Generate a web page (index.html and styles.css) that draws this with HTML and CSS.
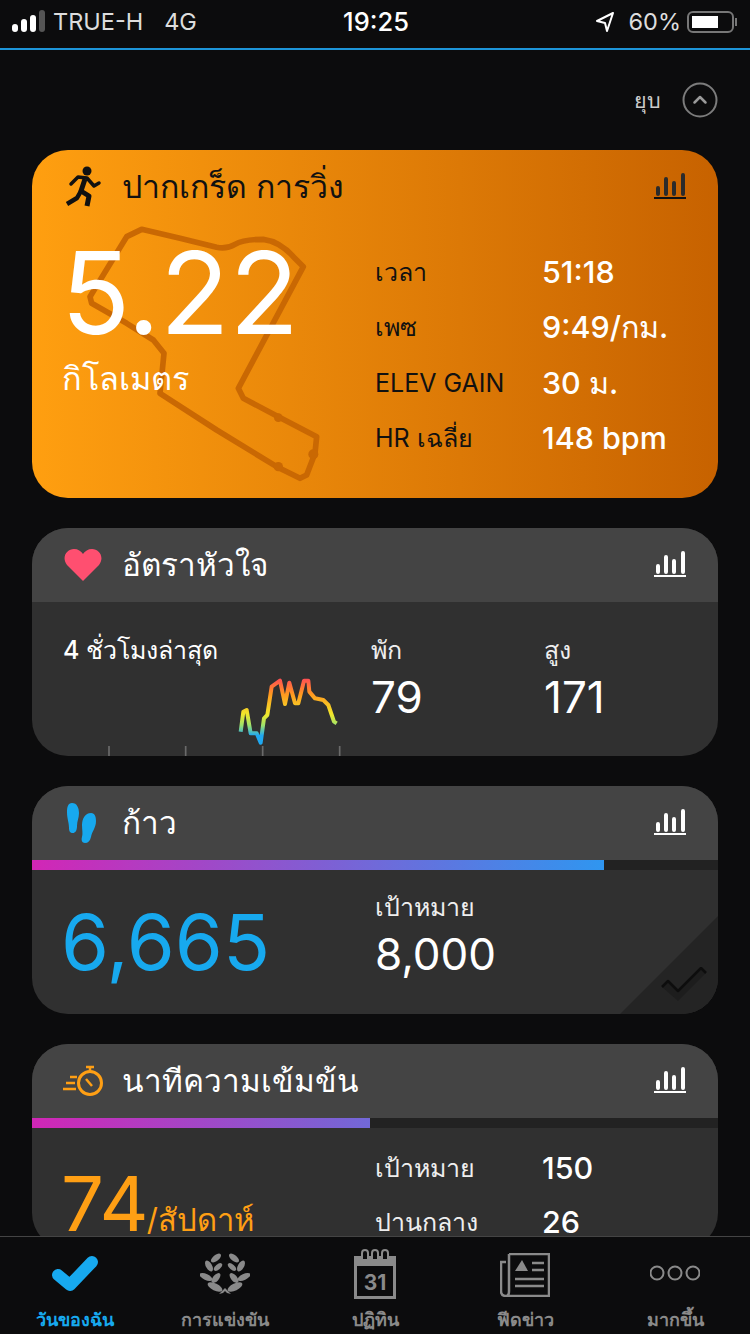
FILE: index.html
```html
<!DOCTYPE html>
<html>
<head>
  <title>Garmin Connect</title>
  <link rel="stylesheet" href="styles.css">
</head>
<body>
  <div class="status">
    <div class="status-left">
      <svg class="signal" width="34" height="24" viewBox="0 0 34 24">
        <rect x="0" y="14" width="6" height="8" rx="3" fill="#fff"/>
        <rect x="9" y="9" width="6" height="13" rx="3" fill="#fff"/>
        <rect x="18" y="5" width="6" height="17" rx="3" fill="#fff"/>
        <rect x="27" y="0" width="6" height="22" rx="3" fill="#555"/>
      </svg>
      <span class="carrier">TRUE-H</span>
      <span class="net">4G</span>
    </div>
    <div class="clock">19:25</div>
    <div class="status-right">
      <svg width="20" height="22" viewBox="0 0 20 22"><path d="M18 2 L2 10 L10 12 L12 20 Z" fill="none" stroke="#fff" stroke-width="2" stroke-linejoin="round"/></svg>
      <span class="pct">60%</span>
      <div class="battery"><div class="battery-fill"></div></div>
      <div class="battery-tip"></div>
    </div>
  </div>

  <div class="content">
    <div class="collapse">
      <span>ยุบ</span>
      <svg width="36" height="36" viewBox="0 0 36 36"><circle cx="18" cy="18" r="16.5" fill="none" stroke="#7c7c7c" stroke-width="2"/><path d="M12.5 20.5 L18 15 L23.500 20.500" fill="none" stroke="#9a9a9a" stroke-width="2.500" stroke-linecap="round" stroke-linejoin="round"/></svg>
    </div>

    <div class="card card-run">
      <svg class="route" width="350" height="350" viewBox="0 0 1050 1050">
        <path d="M335 238 L450 265 L560 292 Q590 298 615 283 Q640 268 700 268 Q750 275 790 320 L820 350 L625 715 L640 745 L745 800 L860 860 L855 910 L830 975 L810 985 L740 950 L560 840 L390 730 L402 610 L370 570 L290 520 L185 460 L180 440 L290 260 Z" fill="none" stroke="#c96803" stroke-width="17" stroke-linejoin="round"/>
        <circle cx="745" cy="803" r="13" fill="#c96803"/>
        <circle cx="850" cy="913" r="15" fill="#c96803"/>
        <circle cx="745" cy="950" r="14" fill="#c96803"/>
      </svg>
      <div class="card-head">
        <svg class="head-icon" width="40" height="44" viewBox="0 0 40 44">
          <circle cx="24" cy="6" r="4.500" fill="#111"/>
          <path d="M8 19 L15 12 L24 13 L31 21 L36 18" fill="none" stroke="#111" stroke-width="3.500" stroke-linecap="round" stroke-linejoin="round"/>
          <path d="M22 14 L18 26 L26 31 L24 41" fill="none" stroke="#111" stroke-width="5" stroke-linejoin="round"/>
          <path d="M18 26 L14 33 L4 39" fill="none" stroke="#111" stroke-width="4.500" stroke-linejoin="round"/>
        </svg>
        <span class="title title-dark">ปากเกร็ด การวิ่ง</span>
        <svg class="chart-icon" width="32" height="28" viewBox="0 0 32 28">
          <path d="M4 21 V15 M12 21 V6 M20 21 V10 M29 21 V2" stroke="#2b2b2b" stroke-width="4" stroke-linecap="round"/>
          <rect x="0" y="24" width="32" height="2" fill="#111"/>
        </svg>
      </div>
      <div class="run-body">
        <div class="run-main">
          <div class="run-dist">5.22</div>
          <div class="run-unit">กิโลเมตร</div>
        </div>
        <div class="run-stats">
          <span class="stat-label">เวลา</span><span class="stat-value">51:18</span>
          <span class="stat-label">เพซ</span><span class="stat-value">9:49/กม.</span>
          <span class="stat-label">ELEV GAIN</span><span class="stat-value">30 ม.</span>
          <span class="stat-label">HR เฉลี่ย</span><span class="stat-value">148 bpm</span>
        </div>
      </div>
    </div>

    <div class="card">
      <div class="card-head head-gray">
        <svg class="head-icon" width="40" height="34" viewBox="0 0 40 34"><path d="M20 33 L4 17 C-2 9 4 1 11 1 C15 1 18 3 20 6 C22 3 25 1 29 1 C36 1 42 9 36 17 Z" fill="#ff4f70"/></svg>
        <span class="title">อัตราหัวใจ</span>
        <svg class="chart-icon" width="32" height="28" viewBox="0 0 32 28">
          <path d="M4 21 V15 M12 21 V6 M20 21 V10 M29 21 V2" stroke="#fff" stroke-width="4" stroke-linecap="round"/>
          <rect x="0" y="24" width="32" height="2" fill="#fff"/>
        </svg>
      </div>
      <div class="heart-body">
        <div class="heart-left">
          <div class="heart-label">4 ชั่วโมงล่าสุด</div>
          <svg class="heart-chart" width="339" height="80" viewBox="6 438 1017 240">
            <defs>
              <linearGradient id="hr" gradientUnits="userSpaceOnUse" x1="0" y1="445" x2="0" y2="640">
                <stop offset="0" stop-color="#ff4d55"/>
                <stop offset="0.25" stop-color="#ff9a1f"/>
                <stop offset="0.55" stop-color="#f2e72a"/>
                <stop offset="0.72" stop-color="#9fe36a"/>
                <stop offset="0.88" stop-color="#1fa8f0"/>
              </linearGradient>
            </defs>
            <path d="M632 605 L640 545 L650 540 L662 610 L680 610 L692 638 L702 565 L712 555 L725 470 L750 452 L765 522 L778 458 L795 520 L805 520 L822 452 L835 452 L838 485 L855 505 L880 510 L895 525 L912 575 L920 580" fill="none" stroke="url(#hr)" stroke-width="12" stroke-linejoin="round"/>
            <path d="M237 648 V678 M467 648 V678 M698 648 V678 M929 648 V678" stroke="#6a6a6a" stroke-width="5"/>
          </svg>
        </div>
        <div class="heart-col">
          <div class="small-label">พัก</div>
          <div class="mid-value">79</div>
        </div>
        <div class="heart-col">
          <div class="small-label">สูง</div>
          <div class="mid-value">171</div>
        </div>
      </div>
    </div>

    <div class="card">
      <div class="card-head head-gray">
        <svg class="head-icon" width="40" height="42" viewBox="0 0 40 42">
          <path d="M9 1 C14 1 16 6 16 11 C16 16 14 19 14 24 C14 29 12 31 10 31 C7 31 6 29 6 26 C6 20 4 17 4 10 C4 5 5 1 9 1 Z" fill="#17a9ef"/>
          <path d="M28 11 C32 11 33 15 33 19 C33 26 29 29 28 35 C27 39 25 41 22 41 C19 41 18 38 19 35 C20 31 19 28 19 23 C19 17 22 11 28 11 Z" fill="#17a9ef"/>
        </svg>
        <span class="title">ก้าว</span>
        <svg class="chart-icon" width="32" height="28" viewBox="0 0 32 28">
          <path d="M4 21 V15 M12 21 V6 M20 21 V10 M29 21 V2" stroke="#fff" stroke-width="4" stroke-linecap="round"/>
          <rect x="0" y="24" width="32" height="2" fill="#fff"/>
        </svg>
      </div>
      <div class="track"><div class="fill" style="width:572px"></div></div>
      <div class="steps-body">
        <div class="steps-count">6,665</div>
        <div class="steps-goal">
          <div class="small-label">เป้าหมาย</div>
          <div class="mid-value">8,000</div>
        </div>
      </div>
      <div class="corner"></div>
      <svg class="corner-check" width="48" height="35" viewBox="0 0 48 35">
        <path d="M2 20 L8 14 L18 24 L41 1 L46 6 L18 34 Z" fill="#1d1d1d"/>
        <path d="M2 20 L8 14 L18 24 L41 1 L46 6" fill="none" stroke="#0d0d0d" stroke-width="2.500" stroke-linejoin="round"/>
      </svg>
    </div>

    <div class="card">
      <div class="card-head head-gray">
        <svg class="head-icon" width="42" height="32" viewBox="0 0 42 32">
          <circle cx="28" cy="18" r="11.500" fill="none" stroke="#ff9f14" stroke-width="3"/>
          <path d="M28 1 V6 M24 2 H32 M24 14 L30 21 M1 24 H14 M4 18 H13 M8 12 H15" stroke="#ff9f14" stroke-width="2.500"/>
        </svg>
        <span class="title">นาทีความเข้มข้น</span>
        <svg class="chart-icon" width="32" height="28" viewBox="0 0 32 28">
          <path d="M4 21 V15 M12 21 V6 M20 21 V10 M29 21 V2" stroke="#fff" stroke-width="4" stroke-linecap="round"/>
          <rect x="0" y="24" width="32" height="2" fill="#fff"/>
        </svg>
      </div>
      <div class="track"><div class="fill" style="width:338px"></div></div>
      <div class="intensity-body">
        <div class="intensity-count"><span class="intensity-num">74</span><span class="intensity-unit">/สัปดาห์</span></div>
        <div class="intensity-stats">
          <span class="small-label">เป้าหมาย</span><span class="stat-value">150</span>
          <span class="small-label">ปานกลาง</span><span class="stat-value">26</span>
        </div>
      </div>
    </div>
  </div>

  <div class="tabs">
    <div class="tab tab-active">
      <svg width="50" height="44" viewBox="0 0 50 44"><path d="M8 22 L20 32 L42 9" fill="none" stroke="#17a9ef" stroke-width="12" stroke-linecap="round" stroke-linejoin="round"/></svg>
      <span>วันของฉัน</span>
    </div>
    <div class="tab">
      <svg width="50" height="44" viewBox="0 0 50 44" fill="#8a8a8a">
        <ellipse cx="16" cy="5" rx="3" ry="6" transform="rotate(50 16 5)"/>
        <ellipse cx="9" cy="13" rx="3" ry="6" transform="rotate(-30 9 13)"/>
        <ellipse cx="18" cy="14" rx="2.500" ry="5" transform="rotate(50 18 14)"/>
        <ellipse cx="6" cy="24" rx="3" ry="7" transform="rotate(-65 6 24)"/>
        <ellipse cx="16" cy="25" rx="3" ry="6" transform="rotate(40 16 25)"/>
        <ellipse cx="15" cy="34" rx="3.500" ry="8" transform="rotate(-65 15 34)"/>
        <ellipse cx="34" cy="5" rx="3" ry="6" transform="rotate(-50 34 5)"/>
        <ellipse cx="41" cy="13" rx="3" ry="6" transform="rotate(30 41 13)"/>
        <ellipse cx="32" cy="14" rx="2.500" ry="5" transform="rotate(-50 32 14)"/>
        <ellipse cx="44" cy="24" rx="3" ry="7" transform="rotate(65 44 24)"/>
        <ellipse cx="34" cy="25" rx="3" ry="6" transform="rotate(-40 34 25)"/>
        <ellipse cx="35" cy="34" rx="3.500" ry="8" transform="rotate(65 35 34)"/>
        <path d="M25 35 L31 41 L27 40 L25 38 L23 40 L19 41 Z"/>
      </svg>
      <span>การแข่งขัน</span>
    </div>
    <div class="tab">
      <svg class="cal-icon" width="44" height="50" viewBox="0 0 44 50">
        <rect x="1" y="7" width="42" height="43" fill="#8a8a8a"/>
        <rect x="4" y="17" width="36" height="30" fill="#0c0c0d"/>
        <path d="M9 10 V4 Q9 1 12 1 Q15 1 15 4 V10 M19 10 V4 Q19 1 22 1 Q25 1 25 4 V10 M29 10 V4 Q29 1 32 1 Q35 1 35 4 V10" fill="#0c0c0d" stroke="#8a8a8a" stroke-width="2"/>
        <text x="22" y="41" text-anchor="middle" class="cal-day">31</text>
      </svg>
      <span>ปฏิทิน</span>
    </div>
    <div class="tab">
      <svg width="50" height="44" viewBox="0 0 50 44">
        <path d="M9 1 H49 V43 H6 Q1 43 1 38 V9 H6 M9 1 V38 Q9 43 6 43" fill="none" stroke="#8a8a8a" stroke-width="2.500"/>
        <path d="M15 18 L22 7 L28 18 Z" fill="#8a8a8a"/>
        <path d="M32 10 H44 M32 17 H44 M15 26 H44 M15 33 H44" stroke="#8a8a8a" stroke-width="2.500"/>
      </svg>
      <span>ฟีดข่าว</span>
    </div>
    <div class="tab">
      <svg width="50" height="44" viewBox="0 0 50 44">
        <circle cx="7" cy="20" r="6.500" fill="none" stroke="#8a8a8a" stroke-width="2"/>
        <circle cx="25" cy="20" r="6.500" fill="none" stroke="#8a8a8a" stroke-width="2"/>
        <circle cx="43" cy="20" r="6.500" fill="none" stroke="#8a8a8a" stroke-width="2"/>
      </svg>
      <span>มากขึ้น</span>
    </div>
  </div>
</body>
</html>
```

FILE: styles.css
```css
* {
  box-sizing: border-box;
}

html, body {
  margin: 0;
  height: 1334px;
  overflow: hidden;
}

body {
  display: flex;
  flex-direction: column;
  background-color: #0c0c0d;
  color: #fff;
  font-family: Inter, "Noto Sans", sans-serif;
}

/* status bar */
.status {
  flex: none;
  height: 50px;
  padding: 0 12px 5px;
  display: grid;
  grid-template-columns: 1fr auto 1fr;
  align-items: center;
  border-bottom: 2px solid #1d95d8;
  font-size: 23.500px;
}

.status-left {
  display: flex;
  align-items: center;
}

.carrier {
  margin-left: 7px;
  color: #ddd;
}

.net {
  margin-left: 21px;
  color: #ddd;
}

.clock {
  font-weight: 500;
  font-size: 25.500px;
  margin-left: 2px;
}

.status-right {
  display: flex;
  align-items: center;
  justify-content: flex-end;
  margin-right: 1px;
}

.pct {
  margin-left: 14px;
  margin-right: 6px;
  color: #ddd;
}

.battery {
  width: 47px;
  height: 22px;
  padding: 3px;
  border: 2px solid #777;
  border-radius: 6px;
}

.battery-fill {
  width: 26px;
  height: 100%;
  background-color: #fff;
}

.battery-tip {
  width: 2px;
  height: 8px;
  margin-left: 1px;
  background-color: #777;
}

/* main scroll area */
.content {
  flex: 1;
  overflow: hidden;
  padding: 0 32px;
}

.collapse {
  height: 100px;
  display: flex;
  align-items: center;
  justify-content: flex-end;
  gap: 21px;
  color: #ccc;
  font-size: 21.500px;
}

.card {
  position: relative;
  margin-bottom: 30px;
  border-radius: 36px;
  background-color: #303030;
  overflow: hidden;
}

.card-head {
  position: relative;
  height: 74px;
  padding: 0 32px;
  display: flex;
  align-items: center;
}

.head-gray {
  background-color: #444;
}

.head-icon {
  flex: none;
  width: 42px;
  margin-right: 18px;
  margin-left: -2px;
}

.title {
  flex: 1;
  font-size: 31.500px;
  line-height: 44px;
}

.title-dark {
  color: #111;
  font-size: 32px;
}

.chart-icon {
  flex: none;
}

/* run card */
.card-run {
  height: 348px;
  background: linear-gradient(90deg, #ff9f10, #c76200);
}

.route {
  position: absolute;
  left: -2px;
  top: 0;
}

.run-body {
  position: relative;
  display: grid;
  grid-template-columns: 343px 1fr;
}

.run-main {
  padding-left: 29px;
}

.run-dist {
  margin-top: 2px;
  font-size: 114px;
  font-weight: 400;
  line-height: 134px;
}

.run-unit {
  margin: -3px 0 0 1px;
  font-size: 32.500px;
  line-height: 44px;
}

.run-stats {
  display: grid;
  grid-template-columns: 167px 1fr;
  grid-auto-rows: 55.500px;
  align-items: center;
  padding-top: 20px;
}

.stat-label {
  color: #111;
  font-size: 25px;
  line-height: 34px;
}

.stat-value {
  font-size: 30.500px;
  font-weight: 500;
  line-height: 36px;
  color: #fff;
}

/* heart card */
.heart-body {
  height: 154px;
  display: grid;
  grid-template-columns: 339px 173px 1fr;
}

.heart-left {
  display: flex;
  flex-direction: column;
  justify-content: space-between;
}

.heart-label {
  padding: 30px 0 0 31px;
  font-size: 25px;
  font-weight: 500;
  line-height: 36px;
}

.heart-chart {
  display: block;
}

.heart-col {
  padding-top: 31px;
}

.small-label {
  font-size: 25px;
  line-height: 34px;
  color: #eee;
}

.mid-value {
  margin-top: 5px;
  font-size: 44px;
  font-weight: 400;
  line-height: 50px;
}

/* progress cards */
.track {
  height: 10px;
  background-color: #222;
}

.fill {
  height: 100%;
  background: linear-gradient(90deg, #d226b6, #2f96f0) no-repeat;
  background-size: 572px 100%;
}

.steps-body {
  height: 144px;
  display: grid;
  grid-template-columns: 343px 1fr;
  align-items: center;
}

.steps-count {
  padding-left: 29px;
  font-size: 77.500px;
  font-weight: 400;
  color: #17a9ef;
}

.steps-goal {
  align-self: start;
  padding-top: 20px;
}

.corner {
  position: absolute;
  right: 0;
  bottom: 0;
  width: 98px;
  height: 98px;
  background-color: #242424;
  clip-path: polygon(100% 0, 100% 100%, 0 100%);
}

.corner-check {
  position: absolute;
  right: 10px;
  bottom: 12px;
}

.intensity-body {
  display: grid;
  grid-template-columns: 343px 1fr;
}

.intensity-count {
  padding: 29px 0 0 29px;
  color: #ff9f14;
}

.intensity-num {
  font-size: 76px;
  font-weight: 400;
}

.intensity-unit {
  margin-left: -2px;
  font-size: 31px;
}

.intensity-stats {
  display: grid;
  grid-template-columns: 167px 1fr;
  grid-auto-rows: 54px;
  align-items: center;
  padding-top: 13px;
}

/* tab bar */
.tabs {
  flex: none;
  height: 98px;
  border-top: 1px solid #444;
  display: grid;
  grid-template-columns: repeat(5, 150px);
  background-color: #0c0c0d;
}

.tab {
  display: flex;
  flex-direction: column;
  align-items: center;
  padding-top: 16px;
  font-size: 18px;
  font-weight: 600;
  color: #8a8a8a;
}

.tab span {
  margin-top: 10px;
  line-height: 26px;
}

.tab-active {
  color: #17a9ef;
}

.cal-icon {
  margin: -4px 0 -2px;
}

.cal-day {
  font-size: 21px;
  font-weight: 700;
  fill: #8a8a8a;
}
```
